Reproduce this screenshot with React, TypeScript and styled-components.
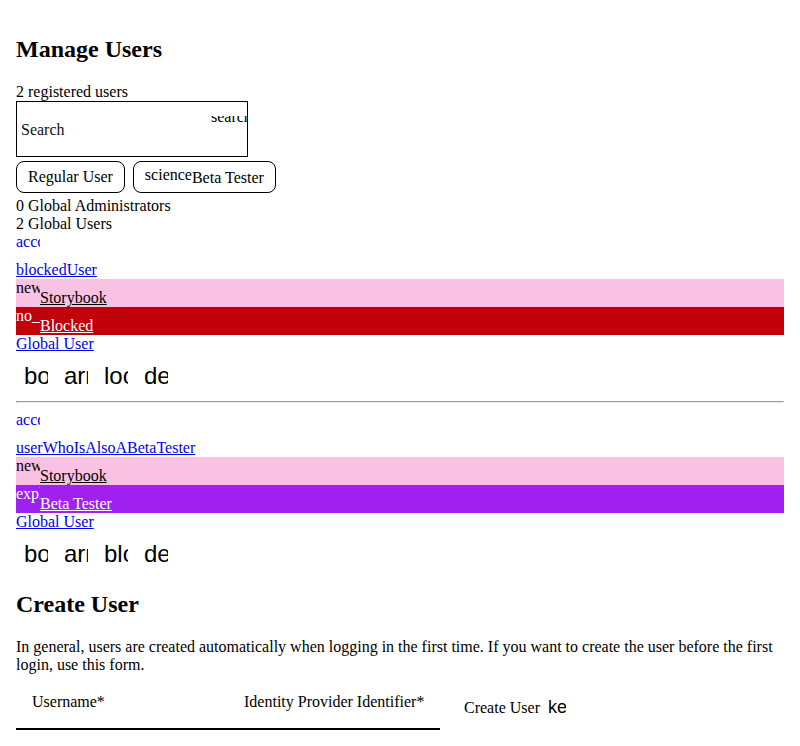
import React from "react";
import styled, { createGlobalStyle } from "styled-components";

const GlobalStyle = createGlobalStyle`
  body {
    margin: 8px;
    font-family: "Liberation Serif", "Times New Roman", serif;
    font-size: 16px;
    color: #000;
    background: #fff;
  }
  #root {
    padding: 8px;
  }
`;

const Title = styled.h2`
  font-size: 24px;
  font-weight: bold;
  margin: 19.92px 0;
`;

const Line = styled.div`
  line-height: 18px;
`;

const SearchBox = styled.label`
  position: relative;
  display: flex;
  align-items: center;
  box-sizing: border-box;
  width: 232px;
  height: 56px;
  border: 1px solid #000;
  padding: 2px 0 0 4px;
`;

const SearchInput = styled.input`
  border: none;
  outline: none;
  padding: 0;
  background: transparent;
  font-family: "Liberation Serif", "Times New Roman", serif;
  font-size: 16px;
  line-height: 18px;
  color: #000;
  width: 150px;
  &::placeholder {
    color: #111;
    opacity: 1;
  }
`;

const SearchIcon = styled.span`
  position: absolute;
  right: 0;
  top: 14px;
  width: 36px;
  height: 8px;
  overflow: hidden;
  white-space: nowrap;
  & > span {
    display: block;
    line-height: 18px;
    margin-top: -8px;
  }
`;

const FilterRow = styled.div`
  display: flex;
  gap: 8px;
  margin: 4px 0;
`;

const FilterButton = styled.button`
  display: flex;
  align-items: center;
  height: 32px;
  box-sizing: border-box;
  padding: 0 11px;
  border: 1px solid #000;
  border-radius: 8px;
  background: #fff;
  font-family: inherit;
  font-size: 16px;
  line-height: 18px;
  color: #000;
`;

const RaisedIcon = styled.span`
  margin-bottom: 4px;
`;

const LoweredLabel = styled.span`
  margin-top: 2px;
`;

const Card = styled.div`
  display: flex;
  flex-direction: column;
`;

const AvatarLink = styled.a`
  display: block;
  width: 24px;
  height: 28px;
  overflow: hidden;
  white-space: nowrap;
  line-height: 18px;
  color: #0000ee;
  text-decoration: none;
`;

const BlockLink = styled.a`
  display: block;
  align-self: flex-start;
  line-height: 18px;
  color: #0000ee;
  text-decoration: underline;
`;

const TagRow = styled.div<{ $bg: string; $fg: string }>`
  display: flex;
  height: 28px;
  background: ${(p) => p.$bg};
  color: ${(p) => p.$fg};
`;

const TagIcon = styled.span`
  width: 24px;
  overflow: hidden;
  white-space: nowrap;
  align-self: flex-start;
  line-height: 18px;
`;

const TagLabel = styled.a`
  align-self: flex-end;
  line-height: 18px;
  color: inherit;
  text-decoration: underline;
`;

const ActionBar = styled.div`
  display: flex;
`;

const ActionButton = styled.button`
  width: 40px;
  height: 40px;
  box-sizing: border-box;
  padding: 8px;
  border: none;
  background: none;
  color: #000;
  font-family: "Liberation Sans", Arial, sans-serif;
  font-size: 24px;
  line-height: 30px;
  & > span {
    display: block;
    width: 24px;
    height: 24px;
    overflow: hidden;
    white-space: nowrap;
    text-align: left;
  }
`;

const Divider = styled.hr`
  margin: 8px 0;
`;

const Paragraph = styled.p`
  margin: 0 0 16px;
  line-height: 18.4px;
`;

const Form = styled.form`
  display: flex;
  align-items: flex-start;
  padding-top: 3px;
`;

const Field = styled.label`
  display: flex;
  flex-direction: column;
  width: 212px;
`;

const FieldLabel = styled.span`
  padding: 0 16px;
  line-height: 18px;
  white-space: nowrap;
`;

const FieldInput = styled.input`
  box-sizing: content-box;
  height: 17px;
  padding: 0;
  border: none;
  border-bottom: 2px solid #000;
  outline: none;
  background: transparent;
`;

const SubmitButton = styled.button`
  display: flex;
  align-items: baseline;
  gap: 8px;
  margin: 5px 0 0 12px;
  padding: 0 12px;
  border: none;
  background: none;
  color: #000;
  font-family: inherit;
  font-size: 16px;
  line-height: 18px;
`;

const SubmitIcon = styled.span`
  width: 18px;
  overflow: hidden;
  white-space: nowrap;
  font-family: "Liberation Sans", Arial, sans-serif;
  font-size: 18px;
  line-height: 18px;
`;

type Tag = { icon: string; label: string; bg: string; fg: string };
type User = { name: string; tags: Tag[]; actions: string[] };

const users: User[] = [
  {
    name: "blockedUser",
    tags: [
      { icon: "new_releases", label: "Storybook", bg: "#f9c2e3", fg: "#000" },
      { icon: "no_accounts", label: "Blocked", bg: "#c20009", fg: "#fff" },
    ],
    actions: ["border_color", "arrow_upward", "lock_open", "delete"],
  },
  {
    name: "userWhoIsAlsoABetaTester",
    tags: [
      { icon: "new_releases", label: "Storybook", bg: "#f9c2e3", fg: "#000" },
      { icon: "explore", label: "Beta Tester", bg: "#a020f0", fg: "#fff" },
    ],
    actions: ["border_color", "arrow_upward", "block", "delete"],
  },
];

function UserCard({ user }: { user: User }) {
  return (
    <Card>
      <AvatarLink href="#">account_circle</AvatarLink>
      <BlockLink href="#">{user.name}</BlockLink>
      {user.tags.map((t) => (
        <TagRow key={t.label} $bg={t.bg} $fg={t.fg}>
          <TagIcon>{t.icon}</TagIcon>
          <TagLabel href="#">{t.label}</TagLabel>
        </TagRow>
      ))}
      <BlockLink href="#">Global User</BlockLink>
      <ActionBar>
        {user.actions.map((a) => (
          <ActionButton key={a} type="button">
            <span>{a}</span>
          </ActionButton>
        ))}
      </ActionBar>
    </Card>
  );
}

export default function App() {
  return (
    <>
      <GlobalStyle />
      <Title>Manage Users</Title>
      <Line>2 registered users</Line>
      <SearchBox>
        <SearchInput placeholder="Search" />
        <SearchIcon>
          <span>search</span>
        </SearchIcon>
      </SearchBox>
      <FilterRow>
        <FilterButton type="button">Regular User</FilterButton>
        <FilterButton type="button">
          <RaisedIcon>science</RaisedIcon>
          <LoweredLabel>Beta Tester</LoweredLabel>
        </FilterButton>
      </FilterRow>
      <Line>0 Global Administrators</Line>
      <Line>2 Global Users</Line>
      {users.map((u, i) => (
        <React.Fragment key={u.name}>
          {i > 0 && <Divider />}
          <UserCard user={u} />
        </React.Fragment>
      ))}
      <Title>Create User</Title>
      <Paragraph>
        In general, users are created automatically when logging in the first
        time. If you want to create the user before the first login, use this
        form.
      </Paragraph>
      <Form onSubmit={(e) => e.preventDefault()}>
        <Field>
          <FieldLabel>Username*</FieldLabel>
          <FieldInput />
        </Field>
        <Field>
          <FieldLabel>Identity Provider Identifier*</FieldLabel>
          <FieldInput />
        </Field>
        <SubmitButton type="submit">
          Create User
          <SubmitIcon>key</SubmitIcon>
        </SubmitButton>
      </Form>
    </>
  );
}
